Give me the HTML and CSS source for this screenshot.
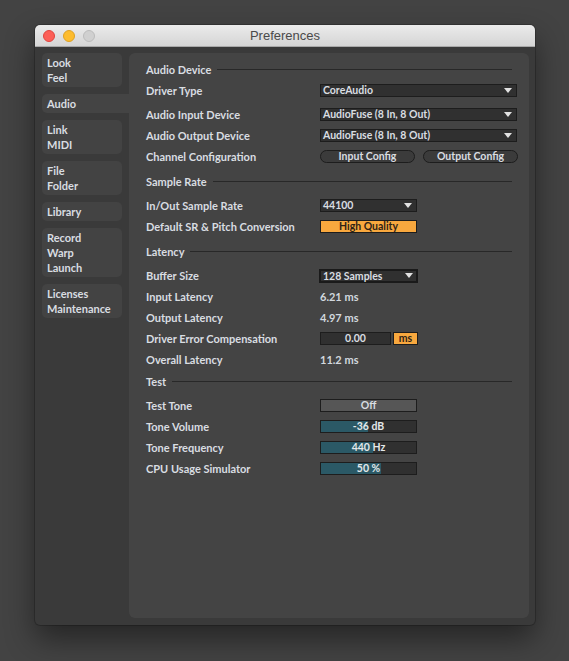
FILE: index.html
```html
<!DOCTYPE html>
<html lang="en">
<head>
  <meta charset="UTF-8">
  <title>Preferences</title>
  <link rel="stylesheet" href="styles.css">
</head>
<body>
  <div class="window">
    <div class="titlebar">
      <div class="lights">
        <span class="light red"></span>
        <span class="light yellow"></span>
        <span class="light off"></span>
      </div>
      <div class="title">Preferences</div>
      <div class="spacer"></div>
    </div>

    <div class="frame">
      <nav class="tabs">
        <div class="tab">Look<br>Feel</div>
        <div class="tab active">Audio</div>
        <div class="tab">Link<br>MIDI</div>
        <div class="tab">File<br>Folder</div>
        <div class="tab">Library</div>
        <div class="tab">Record<br>Warp<br>Launch</div>
        <div class="tab">Licenses<br>Maintenance</div>
      </nav>

      <main class="panel">
        <div class="section first">Audio Device</div>
        <div class="row">
          <span class="label">Driver Type</span>
          <div class="select wide">CoreAudio</div>
        </div>
        <div class="row spaced">
          <span class="label">Audio Input Device</span>
          <div class="select wide">AudioFuse (8 In, 8 Out)</div>
        </div>
        <div class="row">
          <span class="label">Audio Output Device</span>
          <div class="select wide">AudioFuse (8 In, 8 Out)</div>
        </div>
        <div class="row">
          <span class="label">Channel Configuration</span>
          <div class="pills">
            <div class="pill">Input Config</div>
            <div class="pill">Output Config</div>
          </div>
        </div>

        <div class="section">Sample Rate</div>
        <div class="row spaced">
          <span class="label">In/Out Sample Rate</span>
          <div class="select">44100</div>
        </div>
        <div class="row">
          <span class="label">Default SR &amp; Pitch Conversion</span>
          <div class="button orange">High Quality</div>
        </div>

        <div class="section">Latency</div>
        <div class="row spaced">
          <span class="label">Buffer Size</span>
          <div class="select focus">128 Samples</div>
        </div>
        <div class="row">
          <span class="label">Input Latency</span>
          <span class="value">6.21 ms</span>
        </div>
        <div class="row">
          <span class="label">Output Latency</span>
          <span class="value">4.97 ms</span>
        </div>
        <div class="row">
          <span class="label">Driver Error Compensation</span>
          <div class="field">0.00</div>
          <div class="unit orange">ms</div>
        </div>
        <div class="row">
          <span class="label">Overall Latency</span>
          <span class="value">11.2 ms</span>
        </div>

        <div class="section tight">Test</div>
        <div class="row spaced">
          <span class="label">Test Tone</span>
          <div class="button off">Off</div>
        </div>
        <div class="row">
          <span class="label">Tone Volume</span>
          <div class="slider"><div class="fill" style="width: 49%"></div><span>-36 dB</span></div>
        </div>
        <div class="row">
          <span class="label">Tone Frequency</span>
          <div class="slider"><div class="fill" style="width: 55%"></div><span>440 Hz</span></div>
        </div>
        <div class="row">
          <span class="label">CPU Usage Simulator</span>
          <div class="slider"><div class="fill" style="width: 63%"></div><span>50 %</span></div>
        </div>
      </main>
    </div>
  </div>
</body>
</html>
```

FILE: styles.css
```css
* {
  box-sizing: border-box;
}
body {
  margin: 0;
  padding: 25px 0 0 35px;
  height: 661px;
  overflow: hidden;
  background: #434343;
  font-family: 'Lato', 'Noto Sans', sans-serif;
  font-size: 11px;
  font-weight: 700;
  color: #d9dde1;
}
.window {
  width: 500px;
  height: 600px;
  background: #3a3a3a;
  border-radius: 5px;
  box-shadow: 0 14px 30px rgba(0, 0, 0, 0.45), 0 0 0 1px rgba(0, 0, 0, 0.2);
}
.titlebar {
  display: flex;
  align-items: center;
  height: 22px;
  background: linear-gradient(#ebebeb, #d5d5d5);
  border-bottom: 1px solid #a9a9a9;
  border-radius: 5px 5px 0 0;
}
.lights {
  display: flex;
  gap: 8px;
  width: 62px;
  padding-left: 8px;
}
.light {
  width: 12px;
  height: 12px;
  border-radius: 50%;
}
.light.red {
  background: #fc5f57;
  border: 1px solid #e0443e;
}
.light.yellow {
  background: #fdbc2e;
  border: 1px solid #dea123;
}
.light.off {
  background: #d0d0d0;
  border: 1px solid #bcbcbc;
}
.title {
  flex: 1;
  text-align: center;
  font-family: 'Liberation Sans', Arial, sans-serif;
  font-size: 13px;
  font-weight: 400;
  color: #4a4a4a;
}
.spacer {
  width: 62px;
}
.frame {
  display: flex;
  gap: 7px;
  height: 578px;
  padding: 6px 7px 7px 7px;
}
.tabs {
  display: flex;
  flex-direction: column;
  gap: 7px;
  width: 80px;
  flex: none;
}
.tab {
  background: #434343;
  border-radius: 5px;
  padding: 2px 5px;
  line-height: 15px;
}
.tab.active {
  margin-right: -7px;
  border-radius: 5px 0 0 5px;
  background: #444;
}
.panel {
  flex: 1;
  background: #444;
  border-radius: 6px;
  padding: 6px 11px 0 17px;
}
.section {
  display: flex;
  align-items: center;
  height: 21px;
  margin-top: 4px;
}
.section.first {
  margin-top: 0;
}
.section.tight {
  margin-top: 1px;
}
.section::after {
  content: '';
  flex: 1;
  height: 1px;
  margin: 0 6px 0 6px;
  background: #282828;
}
.row {
  display: flex;
  align-items: center;
  height: 21px;
}
.row.spaced {
  margin-top: 3px;
}
.label {
  width: 174px;
  flex: none;
}
.value {
  color: #d2d8de;
}
.select,
.pill,
.button,
.field,
.unit,
.slider {
  height: 13px;
  border: 1px solid #1d1d1d;
  font-size: 10.5px;
  line-height: 11px;
  white-space: nowrap;
}
.select {
  position: relative;
  width: 97px;
  padding: 0 14px 0 2px;
  background: #303030;
}
.select::after {
  content: '';
  position: absolute;
  right: 4px;
  top: 3px;
  border-left: 4px solid transparent;
  border-right: 4px solid transparent;
  border-top: 5px solid #e2e2e2;
}
.select.wide {
  width: 197px;
}
.select.focus {
  width: 99px;
  height: 14px;
  margin-left: -1px;
  border: 2px solid #1a1a1a;
  padding-left: 2px;
}
.select.focus::after {
  top: 2px;
  right: 3px;
}
.pills {
  display: flex;
  gap: 8px;
}
.pill {
  width: 95px;
  border-radius: 7px;
  background: #3b3b3b;
  text-align: center;
}
.button {
  width: 97px;
  text-align: center;
}
.orange {
  background: #f8a83e;
  color: #2e2216;
}
.button.off {
  background: #565656;
}
.field {
  width: 71px;
  background: #303030;
  text-align: center;
}
.unit {
  width: 25px;
  margin-left: 2px;
  text-align: center;
}
.slider {
  display: grid;
  width: 97px;
  background: #303030;
}
.slider > * {
  grid-area: 1 / 1;
}
.slider .fill {
  background: #2b5966;
}
.slider span {
  text-align: center;
  color: #e4e8ea;
}
```
